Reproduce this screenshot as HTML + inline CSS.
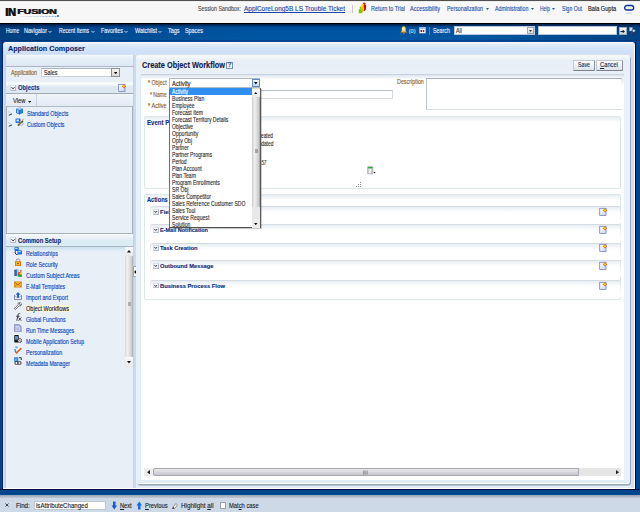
<!DOCTYPE html>
<html><head><meta charset="utf-8">
<style>
*{box-sizing:border-box}
html,body{margin:0;padding:0;width:640px;height:512px;overflow:hidden;background:#00468c;font-family:"Liberation Sans",sans-serif}
.a{position:absolute}
.t{position:absolute;white-space:nowrap;transform-origin:0 0;-webkit-text-stroke:0.12px currentColor}
</style></head><body>

<div class="a" style="left:0px;top:0px;width:640px;height:1px;background:#505050"></div>
<div class="a" style="left:0px;top:1px;width:640px;height:21px;background:linear-gradient(#d8d8d8 0,#ffffff 1px,#f7f7f7 2px,#f7f7f7 20px,#ffffff 21px)"></div>
<div class="a" style="left:0px;top:22px;width:640px;height:1px;background:#f4f4f4"></div>
<div class="a" style="left:0px;top:23px;width:640px;height:1px;background:#000"></div>
<div class="t" style="left:4.8px;top:7.5px;font-size:10.4px;line-height:10.4px;font-weight:bold;color:#111;transform:scaleX(1.06);letter-spacing:-0.3px;text-shadow:0.6px 0 0 #222">IN</div>
<div class="t" style="left:17.2px;top:7.5px;font-size:7.3px;line-height:7.3px;font-weight:bold;color:#1a1a1a;transform:scaleX(1.46);letter-spacing:-0.1px;text-shadow:0.5px 0 0 #1a1a1a">FUSION</div>
<svg class="a" style="left:18px;top:14.5px" width="42" height="3" viewBox="0 0 168 12"><defs><linearGradient id="lg" gradientUnits="userSpaceOnUse" x1="0" y1="0" x2="160" y2="0"><stop offset="0" stop-color="#e0e4ea"/><stop offset=".5" stop-color="#a0b8d8"/><stop offset="1" stop-color="#2a70d0"/></linearGradient></defs><path d="M4 6H156" stroke="url(#lg)" stroke-width="2.5" stroke-dasharray="4 2"/><circle cx="160" cy="4" r="4" fill="#1a60c0"/></svg>
<div class="t" id="t0" style="left:198.00px;top:6.00px;font-size:6.7px;line-height:6.7px;color:#4a4a4a;transform:scaleX(0.797);">Session Sandbox:</div>
<div class="t" id="t1" style="left:244.00px;top:6.00px;font-size:6.7px;line-height:6.7px;color:#1a48a8;transform:scaleX(0.967);text-decoration:underline;">ApplCoreLong5B  LS  Trouble  Ticket</div>
<div class="a" style="left:352px;top:5px;width:1px;height:8px;background:#c8c8c8"></div>
<svg class="a" style="left:358px;top:2px" width="10" height="12" viewBox="0 0 40 48"><circle cx="25" cy="7" r="5" fill="#e81010"/><path d="M20 11H31C33 14 33 22 31 30L26 36H20Z" fill="#d80000"/><circle cx="18" cy="13" r="5" fill="#ffe000"/><path d="M13 17H23C25 20 25 30 23 36L18 42H13Z" fill="#f8c800"/><path d="M7 18H14V29H7Z" fill="#88d800"/><path d="M3 29H17V45H3Z" fill="#78cc00"/></svg>
<div class="t" id="t2" style="left:371.00px;top:6.00px;font-size:6.7px;line-height:6.7px;color:#2050a8;transform:scaleX(0.810);">Return to Trial</div>
<div class="t" id="t3" style="left:410.00px;top:6.00px;font-size:6.7px;line-height:6.7px;color:#2050a8;transform:scaleX(0.824);">Accessibility</div>
<div class="t" id="t4" style="left:447.00px;top:6.00px;font-size:6.7px;line-height:6.7px;color:#2050a8;transform:scaleX(0.787);">Personalization</div>
<div class="t" id="t5" style="left:494.70px;top:6.00px;font-size:6.7px;line-height:6.7px;color:#2050a8;transform:scaleX(0.786);">Administration</div>
<div class="t" id="t6" style="left:540.00px;top:6.00px;font-size:6.7px;line-height:6.7px;color:#2050a8;transform:scaleX(0.726);">Help</div>
<div class="t" id="t7" style="left:562.00px;top:6.00px;font-size:6.7px;line-height:6.7px;color:#2050a8;transform:scaleX(0.768);">Sign Out</div>
<svg class="a" style="left:486px;top:8.4px" width="3" height="2" viewBox="0 0 12 8"><path d="M0 0H12L6 8Z" fill="#2a55a5"/></svg>
<svg class="a" style="left:530.5px;top:8.4px" width="3" height="2" viewBox="0 0 12 8"><path d="M0 0H12L6 8Z" fill="#2a55a5"/></svg>
<svg class="a" style="left:552px;top:8.4px" width="3" height="2" viewBox="0 0 12 8"><path d="M0 0H12L6 8Z" fill="#2a55a5"/></svg>
<svg class="a" style="left:623px;top:4px" width="12" height="11" viewBox="0 0 48 44"><rect x="6.5" y="6" width="36" height="18" rx="9" fill="none" stroke="#0838a0" stroke-width="5.5"/><ellipse cx="24" cy="37" rx="15" ry="3" fill="#b8d0f0" opacity=".7"/></svg>
<div class="t" id="t8" style="left:587.60px;top:6.00px;font-size:6.7px;line-height:6.7px;color:#111;transform:scaleX(0.843);">Bala Gupta</div>
<div class="a" style="left:0px;top:24px;width:640px;height:17px;background:linear-gradient(#001e48 0,#002a58 1px,#003a78 2px,#004a90 3px,#0052a0 4px,#0055a0 12px,#0058a2 15px,#0050a0 16px,#003a8a 17px)"></div>
<div class="a" style="left:0px;top:24px;width:640px;height:17px;background:linear-gradient(90deg,rgba(0,20,60,.35),rgba(0,20,60,.15) 100px,rgba(0,20,60,0) 250px,rgba(0,20,60,0) 480px,rgba(0,20,60,.3) 640px)"></div>
<div class="t" id="t9" style="left:5.70px;top:28.10px;font-size:6.7px;line-height:6.7px;color:#f0f5ff;transform:scaleX(0.740);">Home</div>
<div class="t" id="t10" style="left:23.70px;top:28.10px;font-size:6.7px;line-height:6.7px;color:#f0f5ff;transform:scaleX(0.803);">Navigator</div>
<div class="t" id="t11" style="left:58.80px;top:28.10px;font-size:6.7px;line-height:6.7px;color:#f0f5ff;transform:scaleX(0.766);">Recent Items</div>
<div class="t" id="t12" style="left:101.00px;top:28.10px;font-size:6.7px;line-height:6.7px;color:#f0f5ff;transform:scaleX(0.800);">Favorites</div>
<div class="t" id="t13" style="left:135.00px;top:28.10px;font-size:6.7px;line-height:6.7px;color:#f0f5ff;transform:scaleX(0.818);">Watchlist</div>
<div class="t" id="t14" style="left:168.40px;top:28.10px;font-size:6.7px;line-height:6.7px;color:#f0f5ff;transform:scaleX(0.821);">Tags</div>
<div class="t" id="t15" style="left:185.00px;top:28.10px;font-size:6.7px;line-height:6.7px;color:#f0f5ff;transform:scaleX(0.807);">Spaces</div>
<svg class="a" style="left:48px;top:30.4px" width="4" height="3.5" viewBox="0 0 16 14.0"><path d="M2 4L8 10L14 4" stroke="#cfe0f8" stroke-width="3.8" fill="none"/></svg>
<svg class="a" style="left:90.5px;top:30.4px" width="4" height="3.5" viewBox="0 0 16 14.0"><path d="M2 4L8 10L14 4" stroke="#cfe0f8" stroke-width="3.8" fill="none"/></svg>
<svg class="a" style="left:123.5px;top:30.4px" width="4" height="3.5" viewBox="0 0 16 14.0"><path d="M2 4L8 10L14 4" stroke="#cfe0f8" stroke-width="3.8" fill="none"/></svg>
<svg class="a" style="left:158px;top:30.4px" width="4" height="3.5" viewBox="0 0 16 14.0"><path d="M2 4L8 10L14 4" stroke="#cfe0f8" stroke-width="3.8" fill="none"/></svg>
<svg class="a" style="left:400px;top:26px" width="7.5" height="8" viewBox="0 0 30.0 32"><defs><radialGradient id="bg1" cx=".45" cy=".45" r=".6"><stop offset="0" stop-color="#fff8e0"/><stop offset=".5" stop-color="#ffd060"/><stop offset="1" stop-color="#f09000"/></radialGradient></defs><path d="M15 1C9 1 7 6 7 12V20L1 26H29L23 20V12C23 6 21 1 15 1Z" fill="url(#bg1)"/><circle cx="15" cy="29" r="3" fill="#f08000"/></svg>
<svg class="a" style="left:419px;top:27px" width="7" height="6.5" viewBox="0 0 28 26.0"><rect x="1" y="1" width="26" height="24" fill="#f8f8fc" stroke="#7080a8" stroke-width="1.5"/><rect x="1" y="1" width="26" height="7" fill="#a8b8e0"/><rect x="6" y="12" width="6" height="8" fill="#e00000"/><rect x="15" y="12" width="6" height="8" fill="#e00000"/><rect x="22" y="12" width="3" height="8" fill="#c0c8e0"/></svg>
<div class="t" id="t16" style="left:408.75px;top:28.60px;font-size:5.6px;line-height:5.6px;color:#d0e0f8;">(0)</div>
<div class="t" id="t17" style="left:432.75px;top:28.10px;font-size:6.7px;line-height:6.7px;color:#f0f5ff;transform:scaleX(0.802);">Search</div>
<div class="a" style="left:429px;top:27px;width:1px;height:8px;background:#5a7ab0"></div>
<div class="a" style="left:454px;top:26px;width:81px;height:9px;background:#fff;border:1px solid #b8c8dc"></div>
<div class="t" id="t18" style="left:456.00px;top:28.00px;font-size:6.7px;line-height:6.7px;color:#333;transform:scaleX(0.807);">All</div>
<div class="a" style="left:527px;top:27px;width:7px;height:7px;background:linear-gradient(#f8f8f8,#d8d8d8);border:1px solid #a0a8b0"></div>
<svg class="a" style="left:529px;top:29.6px" width="3" height="2" viewBox="0 0 12 8"><path d="M0 0H12L6 8Z" fill="#333"/></svg>
<div class="a" style="left:538px;top:26px;width:79px;height:9px;background:#fff;border:1px solid #b8c8dc"></div>
<div class="a" style="left:619px;top:27px;width:8px;height:8px;background:linear-gradient(#fafafa,#d8d8d8);border:1px solid #a0a8b0"></div>
<svg class="a" style="left:620px;top:28.5px" width="6" height="5" viewBox="0 0 24 20"><path d="M2 10H13" stroke="#0a1a40" stroke-width="4.5"/><path d="M11 3L20 10L11 17Z" fill="#0a1a40"/></svg>
<svg class="a" style="left:629px;top:26.5px" width="8" height="8" viewBox="0 0 32 32"><rect x="2" y="2" width="12" height="14" fill="#d8dcf0" stroke="#a0a8d0" stroke-width="1"/><circle cx="19" cy="15" r="7" fill="#a8e0f0" stroke="#101830" stroke-width="2.5"/><path d="M13 21L5 30" stroke="#e02010" stroke-width="3"/></svg>
<div class="a" style="left:3px;top:42px;width:632px;height:448px;background:linear-gradient(#ffffff 0,#f0f5fa 1px,#e4eef8 2px,#dae8f8 4px,#d2e2f8 8px,#cddff6 12px,#dae6f4 13px,#e0eaf6 30px,#e2ebf6 100%);border-radius:3px 3px 0 0"></div>
<div class="a" style="left:2px;top:41px;width:1px;height:450px;background:#001a80"></div>
<div class="a" style="left:635px;top:42px;width:1px;height:448px;background:#000040"></div>
<div class="a" style="left:634px;top:45px;width:1px;height:443px;background:#ffffff"></div>
<div class="a" style="left:631px;top:55px;width:3px;height:433px;background:#d0e0ef"></div>
<div class="a" style="left:3px;top:488px;width:632px;height:1px;background:#fff"></div>
<div class="a" style="left:0px;top:489px;width:640px;height:1px;background:#000a40"></div>
<div class="t" id="t19" style="left:7.90px;top:44.90px;font-size:7.9px;line-height:7.9px;color:#0c2870;font-weight:bold;transform:scaleX(0.913);">Application Composer</div>
<div class="a" style="left:4px;top:55px;width:2px;height:433px;background:#c4d5e8"></div>
<div class="a" style="left:6px;top:55px;width:127px;height:433px;background:#e9eff7;border-radius:3px 3px 0 0"></div>
<div class="a" style="left:6px;top:55px;width:127px;height:11px;background:linear-gradient(#f6f9fc,#e8f0f8 3px,#dce8f4)"></div>
<div class="a" style="left:6px;top:66px;width:127px;height:1px;background:#aab6c2"></div>
<div class="t" id="t20" style="left:11.00px;top:69.50px;font-size:6.7px;line-height:6.7px;color:#8a5c20;transform:scaleX(0.795);">Application</div>
<div class="a" style="left:41px;top:68px;width:79px;height:8.5px;background:#fff;border:1px solid #c8d0d8;border-top-color:#a8b4c0"></div>
<div class="t" id="t21" style="left:43.60px;top:69.50px;font-size:6.7px;line-height:6.7px;color:#222;transform:scaleX(0.801);">Sales</div>
<div class="a" style="left:111px;top:68px;width:9px;height:8.5px;background:linear-gradient(#f4f4f4,#d8d8d8);border:1px solid #909090"></div>
<svg class="a" style="left:114px;top:71.6px" width="3.4" height="2.2" viewBox="0 0 13.6 8.8"><path d="M0 0H13.6L6.8 8.8Z" fill="#000"/></svg>
<div class="a" style="left:6px;top:82px;width:127px;height:11px;background:linear-gradient(#eef4f8 0,#ffffff 1px,#f0f6f8 3px,#dde8f2 5px,#dde8f2 100%)"></div>
<div class="a" style="left:6px;top:93px;width:127px;height:1px;background:#a0aab6"></div>
<div class="a" style="left:9.5px;top:84.6px;width:6px;height:6px;background:linear-gradient(#ffffff,#e4e8ee);border:1px solid #b0bcc8;border-top-color:#dde3ea;border-left-color:#d0d8e0"></div>
<svg class="a" style="left:9.5px;top:84.6px" width="6" height="6" viewBox="0 0 24 24"><path d="M6.0 8.64L12 15.36L18.0 8.64" stroke="#181818" stroke-width="3.4" fill="none"/></svg>
<svg class="a" style="left:118px;top:83px" width="9" height="10" viewBox="0 0 36 40"><defs><linearGradient id="dg" x1="0" y1="0" x2="1" y2="1"><stop offset="0" stop-color="#ffffff"/><stop offset="1" stop-color="#c8d4f0"/></linearGradient><radialGradient id="sg"><stop offset="0" stop-color="#ffff60"/><stop offset=".5" stop-color="#ffc000"/><stop offset="1" stop-color="#d04000"/></radialGradient></defs><rect x="3" y="5" width="25" height="29" fill="url(#dg)" stroke="#6068a8" stroke-width="2.6"/><path d="M24 4L27 10L33 13L27 16L24 22L21 16L15 13L21 10Z" fill="url(#sg)"/><circle cx="24" cy="13" r="5.5" fill="url(#sg)"/></svg>
<div class="t" id="t22" style="left:17.80px;top:84.00px;font-size:7px;line-height:7px;color:#10348c;font-weight:bold;transform:scaleX(0.833);">Objects</div>
<div class="a" style="left:6px;top:94px;width:127px;height:12px;background:linear-gradient(#f0f5fa,#e2eaf3)"></div>
<div class="a" style="left:6px;top:106px;width:127px;height:1px;background:#b0b8c0"></div>
<div class="a" style="left:36px;top:94px;width:1px;height:12px;background:#c8d2dc"></div>
<div class="t" id="t23" style="left:12.50px;top:97.70px;font-size:6.7px;line-height:6.7px;color:#2a2a2a;transform:scaleX(0.870);">View</div>
<svg class="a" style="left:27.8px;top:100.8px" width="3.2" height="2" viewBox="0 0 12.8 8"><path d="M0 0H12.8L6.4 8Z" fill="#222"/></svg>
<div class="a" style="left:6px;top:107px;width:127px;height:127px;background:#e9eff7;border-left:1px solid #a8b0b8;border-right:1px solid #a8b0b8;border-bottom:1px solid #a8b0b8"></div>
<svg class="a" style="left:7.5px;top:111px" width="5" height="5" viewBox="0 0 20 20"><path d="M1 2L14 10L4 19" stroke="#888" stroke-width="1.5" fill="none"/><path d="M3 17L16 12" stroke="#111" stroke-width="3"/></svg>
<svg class="a" style="left:7.5px;top:121.7px" width="5" height="5" viewBox="0 0 20 20"><path d="M1 2L14 10L4 19" stroke="#888" stroke-width="1.5" fill="none"/><path d="M3 17L16 12" stroke="#111" stroke-width="3"/></svg>
<svg class="a" style="left:14.5px;top:107px" width="9" height="8" viewBox="0 0 36 32"><path d="M18 2L32 7V24L18 30L4 24V7Z" fill="#2a7ae0"/><path d="M4 7L18 12L32 7L18 2Z" fill="#a8d0ff"/><path d="M18 12V30" stroke="#0a50b0" stroke-width="1.5"/><path d="M8 11V22L14 25V14Z" fill="#d0e8ff" opacity=".8"/></svg>
<svg class="a" style="left:14.5px;top:118px" width="9" height="8" viewBox="0 0 36 32"><rect x="2" y="2" width="20" height="18" rx="4" fill="#1a70e0"/><rect x="6" y="6" width="10" height="8" fill="#c0e0ff"/><circle cx="22" cy="22" r="10" fill="none" stroke="#8080c0" stroke-width="2"/><path d="M12 30L32 12" stroke="#202020" stroke-width="5"/><path d="M14 28L30 13" stroke="#ffd000" stroke-width="3"/><path d="M28 10L34 5" stroke="#e06010" stroke-width="4"/></svg>
<div class="t" id="t24" style="left:26.70px;top:111.00px;font-size:6.7px;line-height:6.7px;color:#0046b8;transform:scaleX(0.801);">Standard Objects</div>
<div class="t" id="t25" style="left:26.70px;top:121.70px;font-size:6.7px;line-height:6.7px;color:#0046b8;transform:scaleX(0.788);">Custom Objects</div>
<div class="a" style="left:6px;top:234px;width:127px;height:12px;background:linear-gradient(#ffffff 0,#f0f6f8 1px,#eef0f8 4px,#dcecf4 6px,#dcecf4 100%)"></div>
<div class="a" style="left:6px;top:246px;width:127px;height:1px;background:#a8b4c0"></div>
<div class="a" style="left:6px;top:247px;width:119px;height:5px;background:linear-gradient(#c8e0ee,#e8eff7)"></div>
<div class="a" style="left:9.5px;top:237.3px;width:6.2px;height:6.2px;background:linear-gradient(#ffffff,#e4e8ee);border:1px solid #b0bcc8;border-top-color:#dde3ea;border-left-color:#d0d8e0"></div>
<svg class="a" style="left:9.5px;top:237.3px" width="6.2" height="6.2" viewBox="0 0 24.8 24.8"><path d="M6.2 8.927999999999999L12.4 15.872000000000002L18.6 8.927999999999999" stroke="#181818" stroke-width="3.4" fill="none"/></svg>
<div class="t" id="t26" style="left:18.00px;top:236.50px;font-size:7px;line-height:7px;color:#0c2a78;font-weight:bold;transform:scaleX(0.831);">Common Setup</div>
<div class="t" id="t27" style="left:25.60px;top:251.00px;font-size:6.7px;line-height:6.7px;color:#0046b8;transform:scaleX(0.792);">Relationships</div>
<div class="t" id="t28" style="left:25.60px;top:261.95px;font-size:6.7px;line-height:6.7px;color:#0046b8;transform:scaleX(0.799);">Role Security</div>
<div class="t" id="t29" style="left:25.60px;top:272.90px;font-size:6.7px;line-height:6.7px;color:#0046b8;transform:scaleX(0.810);">Custom Subject Areas</div>
<div class="t" id="t30" style="left:25.60px;top:283.85px;font-size:6.7px;line-height:6.7px;color:#0046b8;transform:scaleX(0.765);">E-Mail Templates</div>
<div class="t" id="t31" style="left:25.60px;top:294.80px;font-size:6.7px;line-height:6.7px;color:#0046b8;transform:scaleX(0.788);">Import and Export</div>
<div class="a" style="left:24.7px;top:305px;width:46px;height:7px;background:#fcf6d8"></div>
<div class="t" id="t32" style="left:25.60px;top:305.75px;font-size:6.7px;line-height:6.7px;color:#0a1848;transform:scaleX(0.830);">Object Workflows</div>
<div class="t" id="t33" style="left:25.60px;top:316.70px;font-size:6.7px;line-height:6.7px;color:#0046b8;transform:scaleX(0.789);">Global Functions</div>
<div class="t" id="t34" style="left:25.60px;top:327.65px;font-size:6.7px;line-height:6.7px;color:#0046b8;transform:scaleX(0.791);">Run Time Messages</div>
<div class="t" id="t35" style="left:25.60px;top:338.60px;font-size:6.7px;line-height:6.7px;color:#0046b8;transform:scaleX(0.793);">Mobile Application Setup</div>
<div class="t" id="t36" style="left:25.60px;top:349.55px;font-size:6.7px;line-height:6.7px;color:#0046b8;transform:scaleX(0.792);">Personalization</div>
<div class="t" id="t37" style="left:25.60px;top:360.50px;font-size:6.7px;line-height:6.7px;color:#0046b8;transform:scaleX(0.786);">Metadata Manager</div>
<svg class="a" style="left:13.8px;top:247px" width="8" height="8" viewBox="0 0 32 32"><rect x="2" y="0" width="17" height="16" rx="4" fill="#1a6ae0"/><rect x="5" y="3" width="9" height="5" fill="#b8dcff"/><rect x="14" y="13" width="18" height="17" rx="4" fill="#1a6ae0"/><rect x="17" y="16" width="10" height="5" fill="#b8dcff"/><path d="M5 17C3 26 8 31 15 31" stroke="#111" stroke-width="4" fill="none"/></svg>
<svg class="a" style="left:13.8px;top:257.8px" width="8" height="8" viewBox="0 0 32 32"><path d="M9 15V9C9 2 23 2 23 9V15" stroke="#909090" stroke-width="4" fill="none"/><rect x="4" y="13" width="24" height="19" rx="2" fill="#e07a00"/><rect x="8" y="17" width="16" height="11" fill="#ffc030"/><circle cx="16" cy="22" r="3" fill="#802000"/></svg>
<svg class="a" style="left:13.8px;top:269px" width="8" height="8" viewBox="0 0 32 32"><path d="M3 3L13 1V29L3 27Z" fill="#2a78e0"/><path d="M0 6H6M0 11H6M0 16H6M0 21H6M0 26H6" stroke="#223" stroke-width="2.2"/><path d="M13 1L19 4V28L13 30Z" fill="#90c0f0"/><circle cx="27" cy="7" r="4" fill="#d07020"/><path d="M17 13L29 11V25L17 27Z" fill="#e01010"/><circle cx="26" cy="18" r="5" fill="#f8e000"/><ellipse cx="24" cy="27" rx="9" ry="5" fill="#20b020"/></svg>
<svg class="a" style="left:13.8px;top:280.8px" width="8" height="8" viewBox="0 0 32 32"><rect x="0" y="2" width="31" height="24" rx="2" fill="#d08010"/><rect x="2" y="4" width="27" height="20" fill="#f0b030"/><path d="M2 4L15 16L29 4" stroke="#a05000" stroke-width="3" fill="none"/><path d="M2 24L11 14M29 24L20 14" stroke="#b86808" stroke-width="2.5" fill="none"/></svg>
<svg class="a" style="left:13.8px;top:291.5px" width="8" height="8" viewBox="0 0 32 32"><path d="M2 13V30H30V13" stroke="#5a68a8" stroke-width="3" fill="#e8eefa"/><path d="M2 13L10 21H22L30 13" stroke="#5a68a8" stroke-width="2.5" fill="none"/><path d="M16 0L26 11H20V23H12V11H6Z" fill="#1a68d8"/></svg>
<svg class="a" style="left:13.8px;top:302px" width="8" height="8" viewBox="0 0 32 32"><path d="M24 1C18 1 15 6 17 10L3 24C0 27 4 31 7 29L21 15C26 17 31 13 31 7L26 11L21 8L25 2Z" fill="#f0f0f0" stroke="#333" stroke-width="2.6"/></svg>
<svg class="a" style="left:13.8px;top:313px" width="8" height="8" viewBox="0 0 32 32"><path d="M11 31L17 5C18 1 22 0 25 2M9 13H22" stroke="#111" stroke-width="3.2" fill="none"/><path d="M18 18L29 31M29 18L18 31" stroke="#111" stroke-width="3"/></svg>
<svg class="a" style="left:13.8px;top:324px" width="8" height="8" viewBox="0 0 32 32"><path d="M2 2H20L29 10V31H2Z" fill="#a8b0e0" stroke="#7078c0" stroke-width="2.4"/><path d="M7 8H18L24 13V27H7Z" fill="#d4d8f4"/><path d="M10 16H21M10 21H21" stroke="#8088c8" stroke-width="2.2"/></svg>
<svg class="a" style="left:13.8px;top:335px" width="8" height="8" viewBox="0 0 32 32"><rect x="1" y="0" width="18" height="30" rx="3" fill="#141414"/><rect x="4" y="4" width="12" height="15" fill="#5a8ad0"/><circle cx="23" cy="22" r="8" fill="#e4e4e4" stroke="#333" stroke-width="3"/><path d="M18 17L28 27" stroke="#333" stroke-width="2.4"/></svg>
<svg class="a" style="left:13.8px;top:346px" width="8" height="8" viewBox="0 0 32 32"><circle cx="10" cy="5" r="5" fill="#80b0f0"/><path d="M4 12C3 21 8 27 13 29" stroke="#2a78e0" stroke-width="5" fill="none"/><path d="M8 29L29 9" stroke="#c03000" stroke-width="6"/><path d="M9 28L28 10" stroke="#ffb020" stroke-width="3"/></svg>
<svg class="a" style="left:13.8px;top:357px" width="8" height="8" viewBox="0 0 32 32"><rect x="1" y="1" width="16" height="18" fill="#1a78e0"/><path d="M4 5H14M4 10H14M4 14H14" stroke="#a8d0ff" stroke-width="2"/><path d="M20 3H29V12" stroke="#111" stroke-width="3.5" fill="none"/><circle cx="10" cy="24" r="6.5" fill="none" stroke="#111" stroke-width="3"/><circle cx="22" cy="24" r="6.5" fill="#e0e0e0" stroke="#111" stroke-width="3"/></svg>
<div class="a" style="left:125px;top:247px;width:8px;height:121px;background:#ececec"></div>
<div class="a" style="left:125px;top:247px;width:8px;height:9px;background:linear-gradient(#fafafa,#e8e8e8)"></div>
<div class="a" style="left:125px;top:256px;width:8px;height:101px;background:linear-gradient(90deg,#d8d8d8,#f0f0f0 30%,#d0d0d0 80%,#a8a8a8);border-radius:1px"></div>
<div class="a" style="left:125px;top:357px;width:8px;height:10px;background:linear-gradient(#fafafa,#e8e8e8)"></div>
<svg class="a" style="left:127.2px;top:250px" width="4" height="2.5" viewBox="0 0 16 10.0"><path d="M0 10L8 0L16 10Z" fill="#111"/></svg>
<svg class="a" style="left:127.2px;top:361px" width="4" height="2.5" viewBox="0 0 16 10.0"><path d="M0 0H16L8 10Z" fill="#111"/></svg>
<svg class="a" style="left:127.5px;top:302px" width="3" height="4" viewBox="0 0 12 16"><path d="M0 2H12M0 6H12M0 10H12M0 14H12" stroke="#555" stroke-width="1.5"/></svg>
<div class="a" style="left:133px;top:55px;width:3px;height:433px;background:linear-gradient(90deg,#c0d2e2 0,#c0d2e2 1px,#cadaf0 1px)"></div>
<div class="a" style="left:133px;top:266px;width:4px;height:11px;background:#fff;border:1px solid #a0a8b0"></div>
<svg class="a" style="left:133.6px;top:268.5px" width="3" height="6" viewBox="0 0 12 24"><path d="M12 0V24L0 12Z" fill="#111"/></svg>
<div class="a" style="left:136px;top:55px;width:494px;height:429px;background:linear-gradient(#f8fafa,#f0f6f6 3px,#e8eef6 5px,#e9f0f7 20px);border-radius:3px 3px 3px 4px;box-shadow:1px 1px 0 #98a8bc,1px 2px 0 #b8c4d0"></div>
<div class="a" style="left:141px;top:75px;width:483px;height:404.5px;background:#fff"></div>
<div class="a" style="left:140px;top:75px;width:1px;height:404.5px;background:#dceef6"></div>
<div class="a" style="left:141px;top:74px;width:483px;height:1px;background:#c8d2de"></div>
<div class="a" style="left:141px;top:75px;width:483px;height:4px;background:linear-gradient(#dde4ee,#eef2f6 2px,#fafbfc)"></div>
<div class="t" id="t38" style="left:141.70px;top:60.90px;font-size:8.4px;line-height:8.4px;color:#121a48;font-weight:bold;transform:scaleX(0.879);">Create Object Workflow</div>
<div class="a" style="left:226px;top:62px;width:7px;height:7px;background:#f0f4f8;border:1px solid #7890b0"></div>
<div class="t" style="left:227.6px;top:62.4px;font-size:6.5px;line-height:6.5px;font-weight:bold;color:#3a5a90">?</div>
<div class="a" style="left:573px;top:60px;width:22.4px;height:10.6px;background:linear-gradient(#ffffff,#f0f2f6 50%,#dde2ea);border:1px solid #c0c8d0;border-right-color:#8a929c;border-bottom-color:#7a828c;border-radius:1px"></div>
<div class="a" style="left:596.3px;top:60px;width:26.4px;height:10.6px;background:linear-gradient(#ffffff,#f0f2f6 50%,#dde2ea);border:1px solid #c0c8d0;border-right-color:#8a929c;border-bottom-color:#7a828c;border-radius:1px"></div>
<div class="t" id="t39" style="left:578.00px;top:62.00px;font-size:6.7px;line-height:6.7px;color:#1a2a4a;transform:scaleX(0.787);">Save</div>
<div class="t" id="t40" style="left:600.00px;top:62.00px;font-size:6.7px;line-height:6.7px;color:#1a2a4a;transform:scaleX(0.864);"><u>C</u>ancel</div>
<div class="t" id="t41" style="left:147.90px;top:80.00px;font-size:6.7px;line-height:6.7px;color:#8a5c20;transform:scaleX(0.786);">* Object</div>
<div class="t" id="t42" style="left:149.75px;top:91.50px;font-size:6.7px;line-height:6.7px;color:#8a5c20;transform:scaleX(0.755);">* Name</div>
<div class="t" id="t43" style="left:148.00px;top:102.50px;font-size:6.7px;line-height:6.7px;color:#8a5c20;transform:scaleX(0.834);">* Active</div>
<div class="a" style="left:169px;top:90px;width:224px;height:8.5px;background:#fff;border:1px solid #d4dae0;border-top-color:#b8c0c8;border-left-color:#c0c8d0"></div>
<div class="t" id="t44" style="left:396.90px;top:79.00px;font-size:6.7px;line-height:6.7px;color:#8a5c20;transform:scaleX(0.803);">Description</div>
<div class="a" style="left:426px;top:78px;width:195.5px;height:32px;background:#fff;border:1px solid #d8e0e4;border-right:none;border-top-color:#a8b2bc;border-left-color:#c0c8d0"></div>
<div class="a" style="left:621px;top:79px;width:2.5px;height:7px;background:linear-gradient(#e4eaf0,rgba(255,255,255,0))"></div>
<div class="a" style="left:144px;top:116px;width:477px;height:73px;background:#fff;border:1px solid #dde8e8;border-radius:2px"></div>
<div class="a" style="left:145px;top:117px;width:475px;height:5px;background:linear-gradient(#e8edf2,#fff)"></div>
<div class="t" id="t45" style="left:146.70px;top:118.80px;font-size:7px;line-height:7px;color:#0e2e80;font-weight:bold;transform:scaleX(0.865);">Event Point</div>
<div class="t" id="t46" style="left:255.50px;top:132.80px;font-size:6.7px;line-height:6.7px;color:#2a2a2a;transform:scaleX(0.714);">Created</div>
<div class="t" id="t47" style="left:254.80px;top:140.60px;font-size:6.7px;line-height:6.7px;color:#2a2a2a;transform:scaleX(0.727);">Updated</div>
<div class="t" id="t48" style="left:258.50px;top:159.70px;font-size:6.7px;line-height:6.7px;color:#2a2a2a;transform:scaleX(0.653);font-style:italic;">157</div>
<svg class="a" style="left:366.5px;top:165.5px" width="9" height="9" viewBox="0 0 36 36"><rect x="2" y="2" width="22" height="30" rx="2" fill="#c8c8c8" stroke="#888" stroke-width="1.5"/><rect x="4" y="4" width="18" height="5" fill="#20b040"/><rect x="8" y="12" width="8" height="16" fill="#f4f4f4"/><path d="M26 24H34L30 30Z" fill="#111"/></svg>
<div class="a" style="left:360px;top:181.5px;width:1px;height:1px;background:#8a8a8a"></div>
<div class="a" style="left:358px;top:183.5px;width:1px;height:1px;background:#8a8a8a"></div>
<div class="a" style="left:360px;top:183.5px;width:1px;height:1px;background:#8a8a8a"></div>
<div class="a" style="left:356px;top:185.8px;width:1px;height:1px;background:#8a8a8a"></div>
<div class="a" style="left:358px;top:185.8px;width:1px;height:1px;background:#8a8a8a"></div>
<div class="a" style="left:360px;top:185.8px;width:1px;height:1px;background:#8a8a8a"></div>
<div class="a" style="left:144px;top:194px;width:477px;height:106px;background:#fff;border:1px solid #dde8e8;border-radius:2px"></div>
<div class="a" style="left:145px;top:195px;width:475px;height:5px;background:linear-gradient(#e8edf2,#fff)"></div>
<div class="t" id="t49" style="left:147.25px;top:196.00px;font-size:7px;line-height:7px;color:#0e2e80;font-weight:bold;transform:scaleX(0.808);">Actions</div>
<div class="a" style="left:149.5px;top:206px;width:471px;height:17px;background:linear-gradient(#e8edf2,#f6f8fa 3px,#fff 6px);border-top:1px solid #d6dce4;border-radius:3px 3px 0 0"></div>
<div class="a" style="left:149.5px;top:208px;width:1px;height:8px;background:linear-gradient(#dde3ea,rgba(255,255,255,0))"></div>
<div class="a" style="left:619.5px;top:208px;width:1px;height:12px;background:linear-gradient(#dde3ea,rgba(255,255,255,0))"></div>
<div class="a" style="left:153px;top:209.3px;width:5.5px;height:5.5px;background:linear-gradient(#ffffff,#e4e8ee);border:1px solid #b0bcc8;border-top-color:#dde3ea;border-left-color:#d0d8e0"></div>
<svg class="a" style="left:153px;top:209.3px" width="5.5" height="5.5" viewBox="0 0 22.0 22.0"><path d="M5.5 7.92L11.0 14.08L16.5 7.92" stroke="#181818" stroke-width="3.4" fill="none"/></svg>
<svg class="a" style="left:598.5px;top:207px" width="9" height="10" viewBox="0 0 36 40"><defs><linearGradient id="dg" x1="0" y1="0" x2="1" y2="1"><stop offset="0" stop-color="#ffffff"/><stop offset="1" stop-color="#c8d4f0"/></linearGradient><radialGradient id="sg"><stop offset="0" stop-color="#ffff60"/><stop offset=".5" stop-color="#ffc000"/><stop offset="1" stop-color="#d04000"/></radialGradient></defs><rect x="3" y="5" width="25" height="29" fill="url(#dg)" stroke="#6068a8" stroke-width="2.6"/><path d="M24 4L27 10L33 13L27 16L24 22L21 16L15 13L21 10Z" fill="url(#sg)"/><circle cx="24" cy="13" r="5.5" fill="url(#sg)"/></svg>
<div class="t" id="t50" style="left:160.00px;top:209.20px;font-size:6.2px;line-height:6.2px;color:#0a2a78;font-weight:bold;transform:scaleX(0.961);">Field Updates</div>
<div class="a" style="left:149.5px;top:224.4px;width:471px;height:17px;background:linear-gradient(#e8edf2,#f6f8fa 3px,#fff 6px);border-top:1px solid #d6dce4;border-radius:3px 3px 0 0"></div>
<div class="a" style="left:149.5px;top:226.4px;width:1px;height:8px;background:linear-gradient(#dde3ea,rgba(255,255,255,0))"></div>
<div class="a" style="left:619.5px;top:226.4px;width:1px;height:12px;background:linear-gradient(#dde3ea,rgba(255,255,255,0))"></div>
<div class="a" style="left:153px;top:227.3px;width:5.5px;height:5.5px;background:linear-gradient(#ffffff,#e4e8ee);border:1px solid #b0bcc8;border-top-color:#dde3ea;border-left-color:#d0d8e0"></div>
<svg class="a" style="left:153px;top:227.3px" width="5.5" height="5.5" viewBox="0 0 22.0 22.0"><path d="M5.5 7.92L11.0 14.08L16.5 7.92" stroke="#181818" stroke-width="3.4" fill="none"/></svg>
<svg class="a" style="left:598.5px;top:225px" width="9" height="10" viewBox="0 0 36 40"><defs><linearGradient id="dg" x1="0" y1="0" x2="1" y2="1"><stop offset="0" stop-color="#ffffff"/><stop offset="1" stop-color="#c8d4f0"/></linearGradient><radialGradient id="sg"><stop offset="0" stop-color="#ffff60"/><stop offset=".5" stop-color="#ffc000"/><stop offset="1" stop-color="#d04000"/></radialGradient></defs><rect x="3" y="5" width="25" height="29" fill="url(#dg)" stroke="#6068a8" stroke-width="2.6"/><path d="M24 4L27 10L33 13L27 16L24 22L21 16L15 13L21 10Z" fill="url(#sg)"/><circle cx="24" cy="13" r="5.5" fill="url(#sg)"/></svg>
<div class="t" id="t51" style="left:160.00px;top:227.20px;font-size:6.2px;line-height:6.2px;color:#0a2a78;font-weight:bold;transform:scaleX(0.889);">E-Mail Notification</div>
<div class="a" style="left:149.5px;top:242.5px;width:471px;height:17px;background:linear-gradient(#e8edf2,#f6f8fa 3px,#fff 6px);border-top:1px solid #d6dce4;border-radius:3px 3px 0 0"></div>
<div class="a" style="left:149.5px;top:244.5px;width:1px;height:8px;background:linear-gradient(#dde3ea,rgba(255,255,255,0))"></div>
<div class="a" style="left:619.5px;top:244.5px;width:1px;height:12px;background:linear-gradient(#dde3ea,rgba(255,255,255,0))"></div>
<div class="a" style="left:153px;top:245.3px;width:5.5px;height:5.5px;background:linear-gradient(#ffffff,#e4e8ee);border:1px solid #b0bcc8;border-top-color:#dde3ea;border-left-color:#d0d8e0"></div>
<svg class="a" style="left:153px;top:245.3px" width="5.5" height="5.5" viewBox="0 0 22.0 22.0"><path d="M5.5 7.92L11.0 14.08L16.5 7.92" stroke="#181818" stroke-width="3.4" fill="none"/></svg>
<svg class="a" style="left:598.5px;top:243px" width="9" height="10" viewBox="0 0 36 40"><defs><linearGradient id="dg" x1="0" y1="0" x2="1" y2="1"><stop offset="0" stop-color="#ffffff"/><stop offset="1" stop-color="#c8d4f0"/></linearGradient><radialGradient id="sg"><stop offset="0" stop-color="#ffff60"/><stop offset=".5" stop-color="#ffc000"/><stop offset="1" stop-color="#d04000"/></radialGradient></defs><rect x="3" y="5" width="25" height="29" fill="url(#dg)" stroke="#6068a8" stroke-width="2.6"/><path d="M24 4L27 10L33 13L27 16L24 22L21 16L15 13L21 10Z" fill="url(#sg)"/><circle cx="24" cy="13" r="5.5" fill="url(#sg)"/></svg>
<div class="t" id="t52" style="left:160.00px;top:245.20px;font-size:6.2px;line-height:6.2px;color:#0a2a78;font-weight:bold;transform:scaleX(0.927);">Task Creation</div>
<div class="a" style="left:149.5px;top:260.2px;width:471px;height:17px;background:linear-gradient(#e8edf2,#f6f8fa 3px,#fff 6px);border-top:1px solid #d6dce4;border-radius:3px 3px 0 0"></div>
<div class="a" style="left:149.5px;top:262.2px;width:1px;height:8px;background:linear-gradient(#dde3ea,rgba(255,255,255,0))"></div>
<div class="a" style="left:619.5px;top:262.2px;width:1px;height:12px;background:linear-gradient(#dde3ea,rgba(255,255,255,0))"></div>
<div class="a" style="left:153px;top:263.3px;width:5.5px;height:5.5px;background:linear-gradient(#ffffff,#e4e8ee);border:1px solid #b0bcc8;border-top-color:#dde3ea;border-left-color:#d0d8e0"></div>
<svg class="a" style="left:153px;top:263.3px" width="5.5" height="5.5" viewBox="0 0 22.0 22.0"><path d="M5.5 7.92L11.0 14.08L16.5 7.92" stroke="#181818" stroke-width="3.4" fill="none"/></svg>
<svg class="a" style="left:598.5px;top:261px" width="9" height="10" viewBox="0 0 36 40"><defs><linearGradient id="dg" x1="0" y1="0" x2="1" y2="1"><stop offset="0" stop-color="#ffffff"/><stop offset="1" stop-color="#c8d4f0"/></linearGradient><radialGradient id="sg"><stop offset="0" stop-color="#ffff60"/><stop offset=".5" stop-color="#ffc000"/><stop offset="1" stop-color="#d04000"/></radialGradient></defs><rect x="3" y="5" width="25" height="29" fill="url(#dg)" stroke="#6068a8" stroke-width="2.6"/><path d="M24 4L27 10L33 13L27 16L24 22L21 16L15 13L21 10Z" fill="url(#sg)"/><circle cx="24" cy="13" r="5.5" fill="url(#sg)"/></svg>
<div class="t" id="t53" style="left:160.00px;top:263.20px;font-size:6.2px;line-height:6.2px;color:#0a2a78;font-weight:bold;transform:scaleX(0.933);">Outbound Message</div>
<div class="a" style="left:149.5px;top:279.7px;width:471px;height:17px;background:linear-gradient(#e8edf2,#f6f8fa 3px,#fff 6px);border-top:1px solid #d6dce4;border-radius:3px 3px 0 0"></div>
<div class="a" style="left:149.5px;top:281.7px;width:1px;height:8px;background:linear-gradient(#dde3ea,rgba(255,255,255,0))"></div>
<div class="a" style="left:619.5px;top:281.7px;width:1px;height:12px;background:linear-gradient(#dde3ea,rgba(255,255,255,0))"></div>
<div class="a" style="left:153px;top:282.90000000000003px;width:5.5px;height:5.5px;background:linear-gradient(#ffffff,#e4e8ee);border:1px solid #b0bcc8;border-top-color:#dde3ea;border-left-color:#d0d8e0"></div>
<svg class="a" style="left:153px;top:282.90000000000003px" width="5.5" height="5.5" viewBox="0 0 22.0 22.0"><path d="M5.5 7.92L11.0 14.08L16.5 7.92" stroke="#181818" stroke-width="3.4" fill="none"/></svg>
<svg class="a" style="left:598.5px;top:280.6px" width="9" height="10" viewBox="0 0 36 40"><defs><linearGradient id="dg" x1="0" y1="0" x2="1" y2="1"><stop offset="0" stop-color="#ffffff"/><stop offset="1" stop-color="#c8d4f0"/></linearGradient><radialGradient id="sg"><stop offset="0" stop-color="#ffff60"/><stop offset=".5" stop-color="#ffc000"/><stop offset="1" stop-color="#d04000"/></radialGradient></defs><rect x="3" y="5" width="25" height="29" fill="url(#dg)" stroke="#6068a8" stroke-width="2.6"/><path d="M24 4L27 10L33 13L27 16L24 22L21 16L15 13L21 10Z" fill="url(#sg)"/><circle cx="24" cy="13" r="5.5" fill="url(#sg)"/></svg>
<div class="t" id="t54" style="left:160.00px;top:282.80px;font-size:6.2px;line-height:6.2px;color:#0a2a78;font-weight:bold;transform:scaleX(0.940);">Business Process Flow</div>
<div class="a" style="left:144px;top:468px;width:477px;height:7.5px;background:#e6e6e6"></div>
<div class="a" style="left:144px;top:468px;width:9px;height:7.5px;background:#ececec"></div>
<div class="a" style="left:153px;top:468px;width:426px;height:7.5px;background:linear-gradient(#e8e8ea,#dcdce0 40%,#c4c4cc);border:1px solid #a8a8b0;border-radius:2px 0 0 2px"></div>
<div class="a" style="left:137px;top:479.5px;width:492px;height:3.5px;background:#e0ecf4"></div>
<div class="a" style="left:138px;top:483px;width:490px;height:1px;background:#ffffff"></div>
<svg class="a" style="left:147px;top:469.6px" width="3" height="4.4" viewBox="0 0 12 17.6"><path d="M12 0V17.6L0 8.8Z" fill="#222"/></svg>
<svg class="a" style="left:616.3px;top:469.6px" width="3" height="4.4" viewBox="0 0 12 17.6"><path d="M0 0V17.6L12 8.8Z" fill="#222"/></svg>
<svg class="a" style="left:363px;top:469.5px" width="5" height="5" viewBox="0 0 20 20"><path d="M2 2V18M7 2V18M12 2V18M17 2V18" stroke="#555" stroke-width="1.8"/></svg>
<div class="a" style="left:169px;top:77.5px;width:91px;height:10px;background:#fff;border:1px solid #b0bac4"></div>
<div class="t" id="t55" style="left:171.50px;top:80.50px;font-size:6.7px;line-height:6.7px;color:#222;transform:scaleX(0.873);">Activity</div>
<div class="a" style="left:251.6px;top:78.5px;width:8.2px;height:8.3px;background:linear-gradient(#f0f8fe,#c0dcf4);border:1px solid #6088c0"></div>
<svg class="a" style="left:254px;top:82.4px" width="3.6" height="2.4" viewBox="0 0 14.4 9.6"><path d="M0 0H14.4L7.2 9.6Z" fill="#000"/></svg>
<div class="a" style="left:169px;top:87.5px;width:91.5px;height:140.5px;background:#fff;border:1px solid #505050;border-left-color:#707070;border-top-color:#e8d8c0;box-shadow:1px 1px 0 rgba(0,0,0,.2)"></div>
<div class="a" style="left:170.4px;top:88.3px;width:81.2px;height:6.6px;background:#2f8ef0"></div>
<div class="t" id="t56" style="left:172.00px;top:88.60px;font-size:6.7px;line-height:6.7px;color:#fff;transform:scaleX(0.760);">Activity</div>
<div class="t" id="t57" style="left:172.00px;top:95.60px;font-size:6.7px;line-height:6.7px;color:#2a2a2a;transform:scaleX(0.760);">Business Plan</div>
<div class="t" id="t58" style="left:172.00px;top:102.60px;font-size:6.7px;line-height:6.7px;color:#2a2a2a;transform:scaleX(0.760);">Employee</div>
<div class="t" id="t59" style="left:172.00px;top:109.60px;font-size:6.7px;line-height:6.7px;color:#2a2a2a;transform:scaleX(0.760);">Forecast Item</div>
<div class="t" id="t60" style="left:172.00px;top:116.60px;font-size:6.7px;line-height:6.7px;color:#2a2a2a;transform:scaleX(0.760);">Forecast Territory Details</div>
<div class="t" id="t61" style="left:172.00px;top:123.60px;font-size:6.7px;line-height:6.7px;color:#2a2a2a;transform:scaleX(0.760);">Objective</div>
<div class="t" id="t62" style="left:172.00px;top:130.60px;font-size:6.7px;line-height:6.7px;color:#2a2a2a;transform:scaleX(0.760);">Opportunity</div>
<div class="t" id="t63" style="left:172.00px;top:137.60px;font-size:6.7px;line-height:6.7px;color:#2a2a2a;transform:scaleX(0.760);">Opty Obj</div>
<div class="t" id="t64" style="left:172.00px;top:144.60px;font-size:6.7px;line-height:6.7px;color:#2a2a2a;transform:scaleX(0.760);">Partner</div>
<div class="t" id="t65" style="left:172.00px;top:151.60px;font-size:6.7px;line-height:6.7px;color:#2a2a2a;transform:scaleX(0.760);">Partner Programs</div>
<div class="t" id="t66" style="left:172.00px;top:158.60px;font-size:6.7px;line-height:6.7px;color:#2a2a2a;transform:scaleX(0.760);">Period</div>
<div class="t" id="t67" style="left:172.00px;top:165.60px;font-size:6.7px;line-height:6.7px;color:#2a2a2a;transform:scaleX(0.760);">Plan Account</div>
<div class="t" id="t68" style="left:172.00px;top:172.60px;font-size:6.7px;line-height:6.7px;color:#2a2a2a;transform:scaleX(0.760);">Plan Team</div>
<div class="t" id="t69" style="left:172.00px;top:179.60px;font-size:6.7px;line-height:6.7px;color:#2a2a2a;transform:scaleX(0.760);">Program Enrollments</div>
<div class="t" id="t70" style="left:172.00px;top:186.60px;font-size:6.7px;line-height:6.7px;color:#2a2a2a;transform:scaleX(0.760);">SR Obj</div>
<div class="t" id="t71" style="left:172.00px;top:193.60px;font-size:6.7px;line-height:6.7px;color:#2a2a2a;transform:scaleX(0.760);">Sales Competitor</div>
<div class="t" id="t72" style="left:172.00px;top:200.60px;font-size:6.7px;line-height:6.7px;color:#2a2a2a;transform:scaleX(0.760);">Sales Reference Customer SDO</div>
<div class="t" id="t73" style="left:172.00px;top:207.60px;font-size:6.7px;line-height:6.7px;color:#2a2a2a;transform:scaleX(0.760);">Sales Tool</div>
<div class="t" id="t74" style="left:172.00px;top:214.60px;font-size:6.7px;line-height:6.7px;color:#2a2a2a;transform:scaleX(0.760);">Service Request</div>
<div class="t" id="t75" style="left:172.00px;top:221.60px;font-size:6.7px;line-height:6.7px;color:#2a2a2a;transform:scaleX(0.760);">Solution</div>
<div class="a" style="left:252px;top:88.5px;width:8px;height:139px;background:#e8e8e8"></div>
<div class="a" style="left:252px;top:88.5px;width:8px;height:9px;background:linear-gradient(#f8f8f8,#e8e8e8)"></div>
<div class="a" style="left:252px;top:97.3px;width:8px;height:109.6px;background:linear-gradient(90deg,#c8c8c8,#f0f0f0 30%,#d0d0d0 80%,#a0a0a0)"></div>
<div class="a" style="left:252px;top:218.5px;width:8px;height:9px;background:#ececec"></div>
<svg class="a" style="left:254.3px;top:91.5px" width="3.5" height="2.2" viewBox="0 0 14.0 8.8"><path d="M0 9L7 0L14 9Z" fill="#111"/></svg>
<svg class="a" style="left:254.3px;top:222.5px" width="3.5" height="2.2" viewBox="0 0 14.0 8.8"><path d="M0 0H14L7 9Z" fill="#111"/></svg>
<svg class="a" style="left:254.5px;top:148.5px" width="3" height="4" viewBox="0 0 12 16"><path d="M0 2H12M0 6H12M0 10H12M0 14H12" stroke="#444" stroke-width="1.5"/></svg>
<div class="a" style="left:260px;top:88px;width:1px;height:140px;background:#585858"></div>
<div class="a" style="left:0px;top:490px;width:640px;height:5px;background:#00468c"></div>
<div class="a" style="left:0px;top:495px;width:640px;height:3px;background:linear-gradient(#90a0b4,#a8b2bf 1px,#b4bcc8 2px,#c0cad6)"></div>
<div class="a" style="left:0px;top:498px;width:640px;height:14px;background:#cdd9e7"></div>
<div class="a" style="left:33.5px;top:501px;width:72.2px;height:9px;background:#fff;border:1px solid #c0c8d0"></div>
<svg class="a" style="left:4.6px;top:503.2px" width="4" height="4" viewBox="0 0 16 16"><path d="M2 2L14 14M14 2L2 14" stroke="#222" stroke-width="3.2"/></svg>
<div class="t" id="t76" style="left:15.80px;top:503.00px;font-size:6.7px;line-height:6.7px;color:#222;transform:scaleX(0.921);">Find:</div>
<div class="t" id="t77" style="left:35.50px;top:503.00px;font-size:6.7px;line-height:6.7px;color:#222;transform:scaleX(0.912);">isAttributeChanged</div>
<svg class="a" style="left:110.5px;top:501px" width="6.5" height="9" viewBox="0 0 26.0 36"><path d="M8 2H18V18H24L13 34L2 18H8Z" fill="#1a5ad0"/></svg>
<svg class="a" style="left:136px;top:501px" width="6.5" height="9" viewBox="0 0 26.0 36"><path d="M8 34H18V18H24L13 2L2 18H8Z" fill="#1a6ae0"/></svg>
<svg class="a" style="left:171px;top:501.5px" width="7" height="8" viewBox="0 0 28 32"><path d="M8 20L20 6L26 12L14 26Z" fill="#f4f4f4" stroke="#333" stroke-width="2"/><path d="M4 28L8 20L14 26Z" fill="#222"/></svg>
<div class="t" id="t78" style="left:120.00px;top:503.00px;font-size:6.7px;line-height:6.7px;color:#222;transform:scaleX(0.850);"><u>N</u>ext</div>
<div class="t" id="t79" style="left:145.30px;top:503.00px;font-size:6.7px;line-height:6.7px;color:#222;transform:scaleX(0.872);"><u>P</u>revious</div>
<div class="t" id="t80" style="left:181.40px;top:503.00px;font-size:6.7px;line-height:6.7px;color:#222;transform:scaleX(0.942);">Highlight <u>a</u>ll</div>
<div class="a" style="left:219.5px;top:501.8px;width:6.4px;height:7px;background:#fff;border:1px solid #9aa0a8"></div>
<div class="t" id="t81" style="left:228.90px;top:503.00px;font-size:6.7px;line-height:6.7px;color:#222;transform:scaleX(0.868);">Mat<u>c</u>h case</div>
</body></html>
